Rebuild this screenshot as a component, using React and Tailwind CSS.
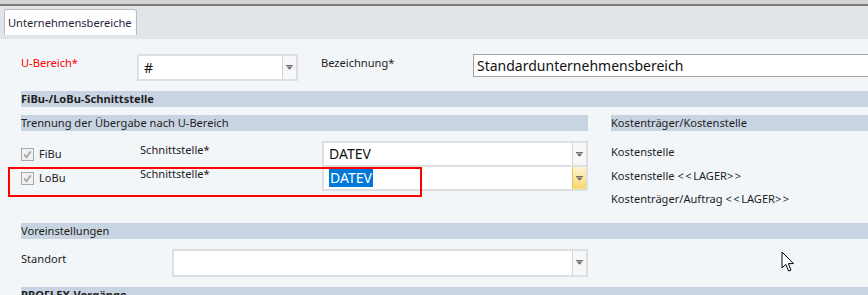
import React from "react";

const font = { fontFamily: '"Noto Sans", "Open Sans", "Liberation Sans", sans-serif' };

function Arrow() {
  return (
    <svg width="7" height="5" viewBox="0 0 7 5">
      <rect x="0" y="0" width="7" height="1" fill="#6b6b6b" />
      <polygon points="0.5,1.5 6.5,1.5 3.5,4.8" fill="#6b6b6b" />
    </svg>
  );
}

function Combo({ value, width, height = 25, selected = false, hot = false, className = "" }) {
  return (
    <div
      className={`flex border-2 border-[#dcdfe3] bg-white ${className}`}
      style={{ width, height }}
    >
      <div className="flex flex-1 items-center pl-[5px] text-[14px] text-[#111]">
        {value &&
          (selected ? (
            <span className="bg-[#0078d7] px-[1px] leading-[18px] text-white">{value}</span>
          ) : (
            <span>{value}</span>
          ))}
      </div>
      <div
        className={`flex w-[14px] items-center justify-center border-l ${
          hot
            ? "border-[#f0c24a] bg-gradient-to-b from-[#fff4cf] to-[#f7d66d]"
            : "border-[#cfd2d6] bg-[#f7f7f7]"
        }`}
      >
        <Arrow />
      </div>
    </div>
  );
}

function Check({ label }) {
  return (
    <div className="flex items-center gap-[5px]">
      <div className="flex h-[13px] w-[13px] items-center justify-center border border-[#a9a9a9] bg-[#f0f0f0]">
        <svg width="9" height="9" viewBox="0 0 9 9">
          <path d="M1.2 4.6 L3.5 7.2 L7.8 1.3" stroke="#a0a0a0" strokeWidth="1.6" fill="none" />
        </svg>
      </div>
      <span className="text-[11.1px] text-[#1e1e1e]">{label}</span>
    </div>
  );
}

export default function App() {
  return (
    <div
      className="relative h-[295px] w-[868px] overflow-hidden bg-[#f3f6f9] text-[11.1px] leading-[16px] text-[#1e1e1e]"
      style={font}
    >
      {/* top edge */}
      <div className="h-[4px] bg-[#d3d3d3]" />
      <div className="h-[2px] bg-[#7c7c7c]" />
      {/* tab strip */}
      <div className="h-[33px] bg-[#e1e4e8] pl-[4px] pt-[3px]">
        <div className="flex h-[26px] w-[133px] items-center rounded-t-[3px] border border-b-0 border-[#b9bcc0] bg-white pl-[3px] text-[11.1px] text-[#1f1f3a]">
          Unternehmensbereiche
        </div>
      </div>

      <div className="pl-[21px]">
        {/* row 1 */}
        <div className="mt-[15px] flex items-start">
          <div className="w-[116px] pt-[1px] text-[#ff0000]">U-Bereich*</div>
          <Combo value="#" width={161} height={27} />
          <div className="ml-[23px] w-[152px] pt-[1px]">Bezeichnung*</div>
          <div className="flex h-[23px] flex-1 items-center border border-r-0 border-[#a3a3a3] bg-white pl-[3px] text-[14px] text-[#111]">
            Standardunternehmensbereich
          </div>
        </div>

        {/* FiBu-/LoBu */}
        <div className="mt-[10px] h-[16px] bg-[#c9d4e2] font-bold leading-[16px]">
          FiBu-/LoBu-Schnittstelle
        </div>

        <div className="mt-[8px] flex">
          <div className="w-[567px]">
            <div className="h-[16px] bg-[#c9d4e2] leading-[16px]">
              Trennung der Übergabe nach U-Bereich
            </div>
            <div className="mt-[10px] flex h-[25px] items-start">
              <div className="w-[119px] pt-[5px]">
                <Check label="FiBu" />
              </div>
              <div className="w-[182px] pt-[1px]">Schnittstelle*</div>
              <Combo value="DATEV" width={266} height={26} />
            </div>
            <div className="flex h-[25px] items-start">
              <div className="w-[119px] pt-[4px]">
                <Check label="LoBu" />
              </div>
              <div className="w-[182px] pt-[0px]">Schnittstelle*</div>
              <Combo value="DATEV" width={266} height={26} selected hot className="-mt-[1px]" />
            </div>
          </div>
          <div className="ml-[23px] flex-1">
            <div className="h-[16px] bg-[#c9d4e2] leading-[16px]">Kostenträger/Kostenstelle</div>
            <div className="mt-[9px] flex flex-col">
              <div className="h-[23.5px] leading-[23.5px]">Kostenstelle</div>
              <div className="h-[23.5px] leading-[23.5px]">
                Kostenstelle <span className="tracking-[1.5px]">&lt;&lt;</span>LAGER<span className="tracking-[1.5px]">&gt;&gt;</span>
              </div>
              <div className="h-[23.5px] leading-[23.5px]">
                Kostenträger/Auftrag <span className="tracking-[1.5px]">&lt;&lt;</span>LAGER<span className="tracking-[1.5px]">&gt;&gt;</span>
              </div>
            </div>
          </div>
        </div>

        {/* Voreinstellungen */}
        <div className="mt-[12px] h-[16px] bg-[#c9d4e2] leading-[16px]">Voreinstellungen</div>
        <div className="mt-[10px] flex items-start">
          <div className="w-[151px] pt-[2px]">Standort</div>
          <Combo value="" width={416} height={28} />
        </div>
        <div className="mt-[10px] h-[16px] bg-[#c9d4e2] font-bold leading-[16px]">PROFLEX-Vorgänge</div>
      </div>

      {/* annotation rectangle */}
      <div className="pointer-events-none absolute left-[8px] top-[167px] h-[30px] w-[414px] border-2 border-[#ff0000]" />

      {/* mouse cursor */}
      <svg className="absolute left-[781px] top-[251px]" width="14" height="22" viewBox="0 0 14 22">
        <path
          d="M1 1 L1 17 L4.8 13.4 L7.6 20 L10 19 L7.3 12.6 L12.5 12.6 Z"
          fill="#ffffff"
          stroke="#000000"
          strokeWidth="1"
          strokeLinejoin="round"
        />
      </svg>
    </div>
  );
}
